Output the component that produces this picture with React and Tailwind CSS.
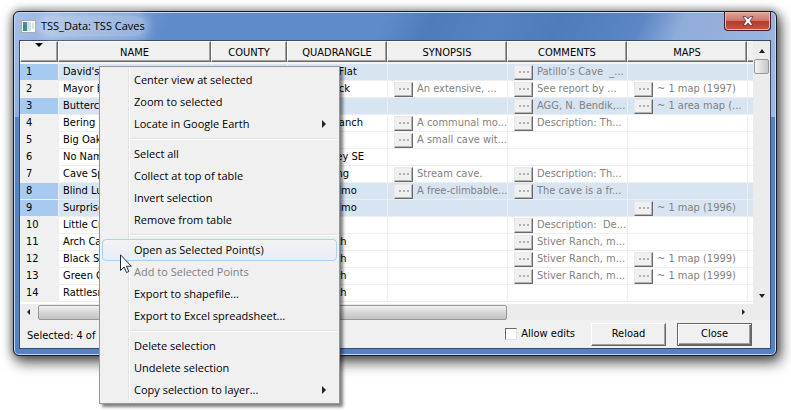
const ROWS = [
  { n: 1, name: "David's Cave", quad: "Panthers Flat", comments: "Patillo’s Cave  _...", sel: true },
  { n: 2, name: "Mayor Blanton", quad: "Round Rock", synopsis: "An extensive, ...", comments: "See report by ...", maps: "~ 1 map (1997)" },
  { n: 3, name: "Buttercup Cave", quad: "", comments: "AGG, N. Bendik,...", maps: "~ 1 area map (...", sel: true },
  { n: 4, name: "Bering Sinkhole", quad: "Morgan Ranch", synopsis: "A communal mo...", comments: "Description: Th..." },
  { n: 5, name: "Big Oak Cave", quad: "", synopsis: "A small cave wit..." },
  { n: 6, name: "No Name Cave", quad: "Leon Valley SE" },
  { n: 7, name: "Cave Springs", quad: "Cold Spring", synopsis: "Stream cave.", comments: "Description: Th..." },
  { n: 8, name: "Blind Lunge", quad: "St. Geronimo", synopsis: "A free-climbable...", comments: "The cave is a fr...", sel: true },
  { n: 9, name: "Surprise Cave", quad: "St. Geronimo", maps: "~ 1 map (1996)", sel: true },
  { n: 10, name: "Little Crevice", quad: "", comments: "Description:  De..." },
  { n: 11, name: "Arch Cave", quad: "Leon North", comments: "Stiver Ranch, m..." },
  { n: 12, name: "Black Scar", quad: "Leon North", comments: "Stiver Ranch, m...", maps: "~ 1 map (1999)" },
  { n: 13, name: "Green Cave", quad: "Leon North", comments: "Stiver Ranch, m...", maps: "~ 1 map (1999)" },
  { n: 14, name: "Rattlesnake", quad: "Leon North" },
];

const MENU = [
  ["Center view at selected", "Zoom to selected", "Locate in Google Earth"],
  ["Select all", "Collect at top of table", "Invert selection", "Remove from table"],
  ["Open as Selected Point(s)", "Add to Selected Points", "Export to shapefile...", "Export to Excel spreadsheet..."],
  ["Delete selection", "Undelete selection", "Copy selection to layer..."],
];
const SUBMENUS = ["Locate in Google Earth", "Copy selection to layer..."];
const HIGHLIGHTED = "Open as Selected Point(s)";
const DISABLED = "Add to Selected Points";

const HEADERS = ["NAME", "COUNTY", "QUADRANGLE", "SYNOPSIS", "COMMENTS", "MAPS"];

function Arrow({ d }) {
  return (
    <svg viewBox="0 0 8 8" className="size-2 shrink-0" aria-hidden="true">
      <path d={d} fill="#222" />
    </svg>
  );
}

function MemoCell({ text, sel }) {
  return (
    <td className={"border-b border-l border-[#eeeeee] p-0 text-[#828282] " + (sel ? "bg-[#d7e4f2]" : "bg-white")}>
      {text && (
        <div className="flex h-4 items-center gap-1 overflow-hidden pl-1.5">
          <button
            type="button"
            aria-label="Show text"
            className="flex h-[15px] w-[19px] shrink-0 items-center justify-center gap-0.5 border border-t-[#e8e8e8] border-r-[#696969] border-b-[#696969] border-l-[#e8e8e8] bg-[#f0f0f0] shadow-[inset_-1px_-1px_0_#b4b4b4]"
          >
            <span className="size-0.5 bg-[#b0b0b0]" />
            <span className="size-0.5 bg-[#b0b0b0]" />
            <span className="size-0.5 bg-[#b0b0b0]" />
          </button>
          <span className="whitespace-pre">{text}</span>
        </div>
      )}
    </td>
  );
}

function DataTable() {
  return (
    <table className="w-full table-fixed border-separate border-spacing-0 leading-4">
      <colgroup>
        <col className="w-[38px]" />
        <col className="w-[153px]" />
        <col className="w-[76px]" />
        <col className="w-[100px]" />
        <col className="w-[120px]" />
        <col className="w-[120px]" />
        <col className="w-[120px]" />
        <col />
      </colgroup>
      <thead>
        <tr className="h-[21px]">
          <th aria-label="Row" className="border border-t-white border-r-[#696969] border-b-[#696969] border-l-white bg-[#f0f0f0] p-0 align-top shadow-[inset_-1px_-1px_0_#a0a0a0]">
            <svg viewBox="0 0 8 4" className="mx-auto mt-px h-1 w-2" aria-hidden="true">
              <path d="M0 0h8L4 4z" fill="#000" />
            </svg>
          </th>
          {HEADERS.map((h) => (
            <th key={h} className="border border-t-white border-r-[#696969] border-b-[#696969] border-l-white bg-[#f0f0f0] p-0 pt-0.5 font-normal shadow-[inset_-1px_-1px_0_#a0a0a0]">
              {h}
            </th>
          ))}
          <th aria-label="More" className="border border-r-0 border-t-white border-b-[#696969] border-l-white bg-[#f0f0f0] p-0 shadow-[inset_0_-1px_0_#a0a0a0]" />
        </tr>
      </thead>
      <tbody>
        <tr className="h-0.5" aria-hidden="true">
          <td colSpan={8} className="bg-[#f4f4f4] p-0" />
        </tr>
        {ROWS.map((r) => {
          const bg = r.sel ? "bg-[#d7e4f2]" : "bg-white";
          return (
            <tr key={r.n} className="h-[17px]">
              <td className={"border-b border-[#f0f0f0] p-0 pl-1.5 " + (r.sel ? "bg-[#a6caf0]" : "bg-[#f0f0f0]")}>{r.n}</td>
              <td className={"truncate border-b border-l border-[#eeeeee] p-0 pl-1 " + bg}>{r.name}</td>
              <td className={"border-b border-l border-[#eeeeee] p-0 " + bg} />
              <td className={"border-b border-l border-[#eeeeee] p-0 pl-1 " + bg}>{r.quad}</td>
              <MemoCell text={r.synopsis} sel={r.sel} />
              <MemoCell text={r.comments} sel={r.sel} />
              <MemoCell text={r.maps} sel={r.sel} />
              <td className={"border-b border-l border-[#eeeeee] p-0 " + bg} />
            </tr>
          );
        })}
      </tbody>
    </table>
  );
}

function ContextMenu() {
  return (
    <div
      role="menu"
      className="absolute top-[66px] left-[99px] w-[241px] border border-[#979797] bg-[#f0f0f0] p-0.5 font-['Open_Sans','Noto_Sans',sans-serif] shadow-[3px_3px_3px_rgba(0,0,0,0.5)]"
    >
      <div className="bg-[linear-gradient(90deg,transparent_26px,#e2e2e2_26px,#e2e2e2_27px,#fff_27px,#fff_28px,transparent_28px)]">
        {MENU.map((group, i) => (
          <div key={i}>
            {i > 0 && (
              <div className="flex h-2 items-center pl-7">
                <div className="h-0.5 w-full border-t border-[#e0e0e0] bg-white" />
              </div>
            )}
            {group.map((item) => (
              <button
                key={item}
                type="button"
                role="menuitem"
                disabled={item === DISABLED}
                className={
                  "flex h-[22px] w-full items-center justify-between rounded-sm border pr-2 pl-[31px] text-left whitespace-nowrap " +
                  (item === HIGHLIGHTED ? "border-[#aecff7] bg-linear-to-b from-[#f2f4f6]/80 to-[#e6ecf5]/80 " : "border-transparent ") +
                  (item === DISABLED ? "text-[#7f7f7f]" : "text-black")
                }
              >
                {item}
                {SUBMENUS.includes(item) && <Arrow d="M2 0l4 4-4 4z" />}
              </button>
            ))}
          </div>
        ))}
      </div>
    </div>
  );
}

export default function App() {
  return (
    <div className="relative min-h-screen overflow-hidden bg-white pt-[11px] pr-3.5 pb-[52px] pl-[13px] font-['DejaVu_Sans_Condensed','DejaVu_Sans',sans-serif] text-[11px] text-black">
      <main className="rounded-md border border-[#111c2c] bg-[#5682c2] bg-[linear-gradient(115deg,#a9c0e6_0%,#8aa9da_8%,#5f8bcb_20%,#5f8bcb_46%,#4e7cba_52%,#5682c2_60%,#4e7cba_68%,#5c86c5_78%,#8fadd9_83%,#9db7e0_100%)] bg-[size:100%_105px] bg-no-repeat px-[5px] pb-1.5 shadow-[0_0_9px_1px_rgba(0,0,0,0.4),3px_6px_14px_1px_rgba(0,0,0,0.6)] inset-ring inset-ring-[#c4d8f3]">
        <header className="flex h-7 items-start justify-between pl-0.5">
          <div className="flex items-center gap-[5px] pt-1">
            <svg viewBox="0 0 15 13" className="h-[13px] w-[15px]" aria-hidden="true">
              <rect x=".5" y=".5" width="14" height="12" fill="#fff" stroke="#a9adb3" />
              <rect x="2" y="2" width="4" height="9" fill="#3d8f7c" />
              <path d="M2 2h4v3H2z" fill="#4f86b8" />
              <rect x="6" y="2" width="4" height="9" fill="#cfe0ea" />
              <rect x="11" y="3" width="2" height="6" fill="#d4ead4" />
            </svg>
            <h1 className="rounded-full bg-white/30 font-['Open_Sans','Noto_Sans',sans-serif] leading-5 shadow-[0_0_8px_4px_rgba(255,255,255,0.3)]">TSS_Data: TSS Caves</h1>
          </div>
          <button
            type="button"
            aria-label="Close window"
            className="flex h-[19px] w-[47px] items-center justify-center rounded-b border border-t-0 border-[#3e1f2a] bg-[linear-gradient(#dfa79c,#cd7467_48%,#b03a2c_50%,#c9563f)] inset-ring inset-ring-[#e8b9b0]"
          >
            <svg viewBox="0 0 12 10" className="h-2.5 w-3" aria-hidden="true">
              <path d="M1 .7h3.2L6 3l1.800-2.300H11L8 5l3 4.300H7.800L6 7 4.200 9.300H1L4 5z" fill="#fff" stroke="#5b3a44" strokeWidth=".9" />
            </svg>
          </button>
        </header>

        <section className="border border-[#33496f] bg-[#f0f0f0]">
          <div className="flex">
            <div className="min-w-0 flex-1 overflow-hidden bg-white pb-0.5">
              <DataTable />
            </div>
            <div className="flex w-[17px] flex-col items-center justify-between bg-[#ececec] pt-1.5 pb-1">
              <div className="flex flex-col items-center gap-1">
                <Arrow d="M1 6l3-4 3 4z" />
                <div className="h-[15px] w-[15px] rounded-xs border border-[#979797] bg-linear-to-r from-[#f5f5f5] to-[#c8c8c8]" />
              </div>
              <Arrow d="M1 2l3 4 3-4z" />
            </div>
          </div>
          <div className="flex h-4 items-center bg-[#ececec] pr-[23px] pl-1">
            <Arrow d="M6 1L3 4l3 3z" />
            <div className="ml-1.5 flex flex-1">
              <div className="h-[15px] w-[469px] rounded-xs border border-[#979797] bg-linear-to-b from-[#f2f2f2] via-[#d6d6d6] to-[#c4c4c4]" />
            </div>
            <Arrow d="M3 1l3 3-3 3z" />
          </div>
          <footer className="flex h-7 items-center pr-[18px] pl-[7px]">
            <p className="flex-1 pt-1">Selected: 4 of 5</p>
            <label className="flex items-center gap-1">
              <input
                type="checkbox"
                className="size-3 appearance-none border border-t-[#696969] border-r-[#e3e3e3] border-b-[#e3e3e3] border-l-[#696969] bg-white"
              />
              Allow edits
            </label>
            <button
              type="button"
              className="ml-4 h-[23px] w-[75px] border border-t-white border-r-[#696969] border-b-[#696969] border-l-white bg-[#f0f0f0] shadow-[inset_-1px_-1px_0_#a0a0a0]"
            >
              Reload
            </button>
            <button
              type="button"
              className="ml-[11px] h-[23px] w-[75px] border border-[#646464] bg-[#f0f0f0] shadow-[inset_1px_1px_0_#fff,inset_-1px_-1px_0_#696969,inset_-2px_-2px_0_#a0a0a0]"
            >
              Close
            </button>
          </footer>
        </section>
      </main>

      <ContextMenu />

      <svg viewBox="0 0 12 19" className="absolute top-[254px] left-[120px] h-[19px] w-3" aria-hidden="true">
        <path d="M.5.8v15.700l3.600-3.500 2.400 5.500 2.300-1-2.400-5.300h4.900z" fill="#fff" stroke="#1d2b45" />
      </svg>
    </div>
  );
}
